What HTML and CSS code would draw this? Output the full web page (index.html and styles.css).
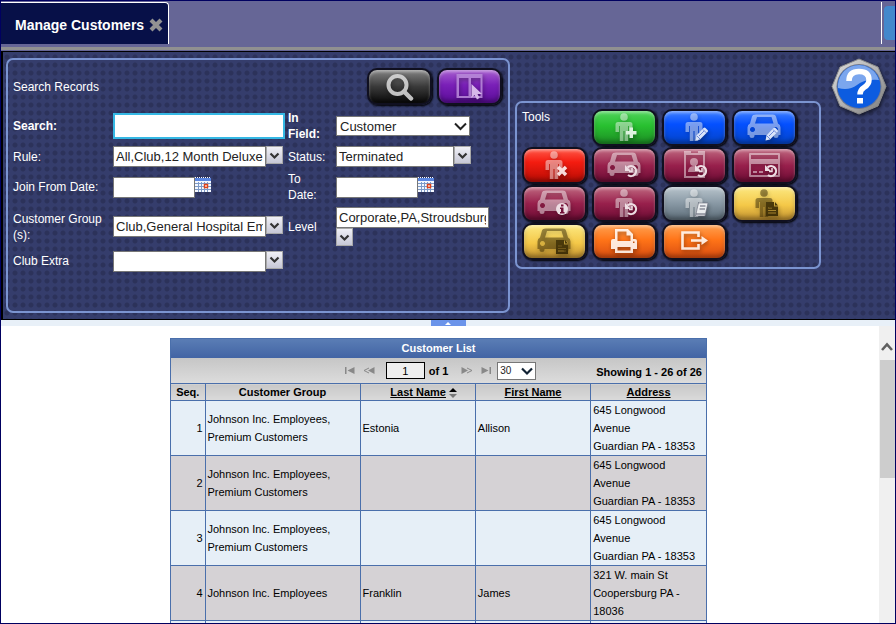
FILE: index.html
```
<!doctype html>
<html lang="en">
<head>
  <meta charset="UTF-8">
  <meta name="viewport" content="width=device-width, initial-scale=1.0">
  <title>Manage Customers</title>
  <link rel="stylesheet" href="styles.css">
</head>
<body>
  <!-- shared icons -->
  <svg class="sprite" aria-hidden="true">
    <symbol id="person" viewBox="0 0 65 37">
      <circle cx="32" cy="8" r="3.8"/>
      <path d="M26 13h12q2.500 0 2.500 2.500V23h-3.500v-6h-.8V32h-3.700V22h-1V32h-3.700V17h-.8v6h-3.500v-7.500q0-2.500 2.500-2.500z"/>
    </symbol>
    <symbol id="car" viewBox="0 0 65 37">
      <path fill-rule="evenodd" d="M24 5.500h17q2.500 0 3 2l2 7q2.500 1 2.500 4V26h-2v1q0 2-2.500 2t-2.500-2v-1H22.500v1q0 2-2.500 2t-2.500-2v-1h-2v-7.500q0-3 2.500-4l2-7q.5-2 4-2zM25 8l-2 6.500h18.500L39.500 8zM20.500 18a2.500 2.500 0 1 0 .01 0zM43.500 18a2.500 2.500 0 1 0 .01 0z"/>
    </symbol>
    <symbol id="reload" viewBox="0 0 65 37">
      <path d="M35.500 20.500A5 5 0 1 1 36 28" fill="none" stroke="currentColor" stroke-width="2.200"/>
      <path d="M33 18v6h6z"/>
      <path d="M40 21v3.500h-3" fill="none" stroke="currentColor" stroke-width="1.500"/>
    </symbol>
    <symbol id="pencil" viewBox="0 0 65 37">
      <path d="M33.500 31.500l1-5 7-7.500q1-1 2 0l2 2q1 1 0 2l-7.500 7.500z"/>
      <path d="M35 27l3 3M41 20.500l3.500 3.500M37 27l5-5" fill="none" stroke="#4a68c8" stroke-width=".7"/>
    </symbol>
    <symbol id="doc" viewBox="0 0 65 37">
      <path fill-rule="evenodd" d="M34 17h8v4.500h4V31H34zM43 17l3 3.500h-3zM36 22.500v1h4v-1zM36 25v1h8v-1zM36 27.500v1h8v-1z"/>
    </symbol>
    <symbol id="chevron" viewBox="0 0 15 15">
      <path d="M3.500 5.500l4 4 4-4" fill="none" stroke="#333" stroke-width="2.200"/>
    </symbol>
    <symbol id="calendar" viewBox="0 0 16 15">
      <path d="M0 2h16v13H0z" fill="#f4f8ff"/>
      <path d="M0 1h16v3H0z" fill="#5b86e0"/>
      <path d="M0 .5h16" stroke="#fff" stroke-dasharray="1 1"/>
      <path d="M0 6.500h16M0 9.500h16M0 12.500h16M3.500 5v10M6.500 5v10M9.500 5v10M12.500 5v10" stroke="#7d9bc9" fill="none"/>
      <path d="M9.500 7.500h3v3h-3z" fill="#fff" stroke="#e0431b" stroke-width="1.500"/>
    </symbol>
  </svg>

  <div id="app">
    <header class="tabs">
      <div class="tab">
        <span>Manage Customers</span>
        <button class="tab-close" type="button" aria-label="Close tab">
          <svg width="14" height="14" viewBox="0 0 14 14"><path d="M2 2l10 10M12 2L2 12" stroke="#929292" stroke-width="4.200"/></svg>
        </button>
      </div>
      <div class="tabs-end">
        <button class="tabs-menu" type="button" aria-label="Menu"></button>
      </div>
    </header>

    <section class="panel">
      <form class="box search">
        <div class="search-head">
          <span>Search Records</span>
          <div class="search-buttons">
            <button class="btn black" type="button" aria-label="Search">
              <svg viewBox="0 0 65 37"><circle cx="30.500" cy="17" r="9" fill="none" stroke="#ddd" stroke-width="4"/><path d="M37 23.500l7 7" stroke="#ddd" stroke-width="4.500" stroke-linecap="round"/></svg>
            </button>
            <button class="btn purple" type="button" aria-label="Select columns">
              <svg viewBox="0 0 65 37"><path fill="#b98bd9" fill-rule="evenodd" d="M19.500 6h26v24h-26zM22 10v18h9.500V10zM34 10v18h9.500V10z"/><path d="M34.500 16v14l3-3 2.500 4.500 2.500-1.500-2-4h4.500z" fill="#e8d4f4"/></svg>
            </button>
          </div>
        </div>

        <div class="fields">
          <label class="strong" for="search">Search:</label>
          <div><input class="focus" id="search" type="text"></div>
          <label class="strong" for="field">In Field:</label>
          <div class="select">
            <select id="field"><option>Customer</option></select>
            <svg class="arrow" width="13" height="13" viewBox="0 0 13 13"><path d="M1 3.500l5.500 5.500L12 3.500" fill="none" stroke="#222" stroke-width="2"/></svg>
          </div>

          <label for="rule">Rule:</label>
          <div class="combo"><input class="wide" id="rule" type="text" value="All,Club,12 Month Deluxe"><button class="drop" type="button" aria-label="Choose rule"><svg><use href="#chevron"/></svg></button></div>
          <label for="status">Status:</label>
          <div class="combo"><input class="medium" id="status" type="text" value="Terminated"><button class="drop" type="button" aria-label="Choose status"><svg><use href="#chevron"/></svg></button></div>

          <label for="from">Join From Date:</label>
          <div class="combo"><input class="date" id="from" type="text"><button class="cal" type="button" aria-label="Pick from date"><svg><use href="#calendar"/></svg></button></div>
          <label for="to">To Date:</label>
          <div class="combo"><input class="date" id="to" type="text"><button class="cal" type="button" aria-label="Pick to date"><svg><use href="#calendar"/></svg></button></div>

          <label for="group">Customer Group (s):</label>
          <div class="combo"><input class="wide" id="group" type="text" value="Club,General Hospital Employees"><button class="drop" type="button" aria-label="Choose group"><svg><use href="#chevron"/></svg></button></div>
          <label for="level">Level</label>
          <div class="combo wrap"><input class="wide" id="level" type="text" value="Corporate,PA,Stroudsburg"><button class="drop" type="button" aria-label="Choose level"><svg><use href="#chevron"/></svg></button></div>

          <label for="extra">Club Extra</label>
          <div class="combo"><input class="wide" id="extra" type="text"><button class="drop" type="button" aria-label="Choose extra"><svg><use href="#chevron"/></svg></button></div>
        </div>
      </form>

      <div class="box tools">
        <span class="tools-title">Tools</span>
        <button class="btn green" type="button" aria-label="Add customer">
          <svg viewBox="0 0 65 37"><use class="dim" href="#person"/><path d="M37.500 18.500h3.500v3.500h3.500v3.500h-3.500v3.500h-3.500v-3.500H34v-3.500h3.500z"/></svg>
        </button>
        <button class="btn blue" type="button" aria-label="Edit customer">
          <svg viewBox="0 0 65 37"><use class="dim" href="#person"/><use href="#pencil"/></svg>
        </button>
        <button class="btn blue" type="button" aria-label="Edit vehicle">
          <svg viewBox="0 0 65 37"><use class="dim" href="#car"/><use href="#pencil"/></svg>
        </button>
        <button class="btn red" type="button" aria-label="Delete customer">
          <svg viewBox="0 0 65 37"><use class="dim" href="#person"/><path d="M36 20l8 8M44 20l-8 8" stroke="currentColor" stroke-width="3.500"/></svg>
        </button>
        <button class="btn maroon" type="button" aria-label="Vehicle history">
          <svg viewBox="0 0 65 37"><use class="dim" href="#car"/><use href="#reload"/></svg>
        </button>
        <button class="btn maroon" type="button" aria-label="Badge history">
          <svg viewBox="0 0 65 37"><path class="dim" fill-rule="evenodd" d="M22 4h7v2h7V4h7v27H22zM24 8v21h17V8z"/><g class="dim"><circle cx="32" cy="15" r="4"/><path d="M26 25q0-6 6-6t6 6z"/></g><use href="#reload"/></svg>
        </button>
        <button class="btn maroon" type="button" aria-label="Card history">
          <svg viewBox="0 0 65 37"><path class="dim" fill-rule="evenodd" d="M18 6h29q1 0 1 1v22q0 1-1 1H18q-1 0-1-1V7q0-1 1-1zM19 8v4h27V8zM19 17v11h27V17zM21 24v2h4v-2zM27 24v2h4v-2z"/><use href="#reload"/></svg>
        </button>
        <button class="btn maroon" type="button" aria-label="Vehicle info">
          <svg viewBox="0 0 65 37"><use class="dim" href="#car"/><circle cx="40" cy="24" r="6"/><path d="M39 19.500h2.500v2H39zM38 22.500h3.500V27h1v1.500H38V27h1v-3h-1z" fill="#701038"/></svg>
        </button>
        <button class="btn maroon" type="button" aria-label="Customer history">
          <svg viewBox="0 0 65 37"><use class="dim" href="#person"/><use href="#reload"/></svg>
        </button>
        <button class="btn gray" type="button" aria-label="Customer notes">
          <svg viewBox="0 0 65 37"><use class="dim" href="#person"/><path d="M36.500 18H46l-3 13h-9.500z" stroke="#667" stroke-width=".6"/><path d="M38 21h5.500M37.500 24h5.500M34 29h9" stroke="#556" fill="none"/></svg>
        </button>
        <button class="btn yellow" type="button" aria-label="Customer report">
          <svg viewBox="0 0 65 37"><use class="dim" href="#person"/><use href="#doc"/></svg>
        </button>
        <button class="btn yellow" type="button" aria-label="Vehicle report">
          <svg viewBox="0 0 65 37"><use class="dim" href="#car"/><use href="#doc"/></svg>
        </button>
        <button class="btn orange" type="button" aria-label="Print">
          <svg viewBox="0 0 65 37"><path fill-rule="evenodd" d="M23 6h13l5 5v5h2q2 0 2 2v8h-4v4H23v-4h-4v-8q0-2 2-2h2zM25.500 8.500V18h13v-5.500H34.500v-4zM25.500 24v3.500h13V24zM41 18.500v1.500h1.500v-1.500z"/></svg>
        </button>
        <button class="btn orange" type="button" aria-label="Exit">
          <svg viewBox="0 0 65 37"><path d="M36.500 14V9.500h-16v16h16V21" fill="none" stroke="currentColor" stroke-width="2.600"/><path d="M29 16.200h10.500V13l6.500 4.500-6.500 4.500v-3.200H29z"/></svg>
        </button>
      </div>

      <button class="help" type="button" aria-label="Help">
        <svg width="56" height="57" viewBox="0 0 56 57">
          <defs>
            <linearGradient id="rim" x1="0" y1="0" x2="1" y2="1">
              <stop offset="0" stop-color="#ddd"/><stop offset=".5" stop-color="#b4b4b4"/><stop offset="1" stop-color="#777"/>
            </linearGradient>
          </defs>
          <path d="M28 1l19 8 8 19.500-8 19.500-19 8-19-8-8-19.500L9 9z" fill="url(#rim)" stroke="#8a8a8a"/>
          <circle cx="28" cy="28.500" r="22.500" fill="#6f7890"/>
          <circle cx="28" cy="28.500" r="21.500" fill="#0c5ce0"/>
          <path d="M7 30a21 21 0 0 1 41-8q-15-1-22 5-8 6-19 3z" fill="#7ba6ee"/>
          <path d="M18 23q0-9.500 10-9.500t10 8.500q0 4.500-5 7.500-4 2.500-4 7" fill="none" stroke="#fff" stroke-width="5.500"/>
          <path d="M26 40h6v5.500h-6z" fill="#fff"/>
        </svg>
      </button>
    </section>

    <div class="splitter">
      <button class="splitter-handle" type="button" aria-label="Collapse panel"></button>
    </div>

    <main class="content">
      <div class="list">
        <div class="list-title">Customer List</div>
        <div class="pager">
          <span></span>
          <div class="pager-nav">
            <button type="button" aria-label="First page"><svg width="10" height="7" viewBox="0 0 10 7"><path d="M0 0h1.500v7H0zM9.500 0v7L2.500 3.500z"/></svg></button>
            <button type="button" aria-label="Previous page"><svg width="12" height="7" viewBox="0 0 12 7"><path d="M11.500 0v7L5 3.500z"/><path d="M6 1L1 3.500 6 6" fill="none" stroke="#888"/></svg></button>
            <input type="text" value="1" aria-label="Page">
            <span>of 1</span>
            <button class="next" type="button" aria-label="Next page"><svg width="12" height="7" viewBox="0 0 12 7"><path d="M.5 0v7L7 3.500z"/><path d="M6 1l5 2.500L6 6" fill="none" stroke="#888"/></svg></button>
            <button type="button" aria-label="Last page"><svg width="10" height="7" viewBox="0 0 10 7"><path d="M8.500 0H10v7H8.500zM.5 0v7l7-3.500z"/></svg></button>
            <div class="select small">
              <select aria-label="Rows per page"><option>30</option></select>
              <svg class="arrow" width="12" height="12" viewBox="0 0 12 12"><path d="M1 3.500l5 5 5-5" fill="none" stroke="#123" stroke-width="2.200"/></svg>
            </div>
          </div>
          <span class="showing">Showing 1 - 26 of 26</span>
        </div>
        <table>
          <thead>
            <tr>
              <th class="col-seq">Seq.</th>
              <th class="col-group">Customer Group</th>
              <th><a href="#">Last Name</a> <svg width="8" height="10" viewBox="0 0 8 10"><path d="M0 4l4-4 4 4z"/><path d="M0 6h8l-4 4z" fill="#777"/></svg></th>
              <th><a href="#">First Name</a></th>
              <th><a href="#">Address</a></th>
            </tr>
          </thead>
          <tbody>
            <tr>
              <td class="seq">1</td>
              <td>Johnson Inc. Employees, Premium Customers</td>
              <td>Estonia</td>
              <td>Allison</td>
              <td>645 Longwood Avenue<br>Guardian PA - 18353</td>
            </tr>
            <tr>
              <td class="seq">2</td>
              <td>Johnson Inc. Employees, Premium Customers</td>
              <td></td>
              <td></td>
              <td>645 Longwood Avenue<br>Guardian PA - 18353</td>
            </tr>
            <tr>
              <td class="seq">3</td>
              <td>Johnson Inc. Employees, Premium Customers</td>
              <td></td>
              <td></td>
              <td>645 Longwood Avenue<br>Guardian PA - 18353</td>
            </tr>
            <tr>
              <td class="seq">4</td>
              <td>Johnson Inc. Employees</td>
              <td>Franklin</td>
              <td>James</td>
              <td>321 W. main St<br>Coopersburg PA - 18036</td>
            </tr>
            <tr>
              <td class="seq"></td>
              <td></td>
              <td></td>
              <td></td>
              <td></td>
            </tr>
          </tbody>
        </table>
      </div>
      <div class="scrollbar">
        <svg width="12" height="10" viewBox="0 0 12 10"><path d="M1 8l5-5.500L11 8" fill="none" stroke="#606060" stroke-width="2.600"/></svg>
        <div class="thumb"></div>
      </div>
    </main>
  </div>
</body>
</html>
```
FILE: styles.css
```
* {
    box-sizing: border-box;
}

body {
    margin: 0;
    font-family: "Liberation Sans", Arial, sans-serif;
    font-size: 12px;
    line-height: 16px;
    color: #000;
}

button {
    padding: 0;
    border: none;
    background: none;
    cursor: pointer;
}

svg {
    display: block;
}

.sprite {
    position: absolute;
    width: 0;
    height: 0;
}

#app {
    display: flex;
    flex-direction: column;
    height: 100vh;
    overflow: hidden;
    border: 1px solid #000060;
}

/* tabs */
.tabs {
    display: flex;
    justify-content: space-between;
    flex: none;
    height: 46px;
    padding: 1px 0 3px;
    background: #666696;
}

.tab {
    display: flex;
    align-items: center;
    gap: 5px;
    padding: 2px 5px 0 14px;
    color: #fff;
    font-size: 14px;
    font-weight: bold;
    background: #071048;
    border-top: 1px solid #fff;
    border-right: 1px solid #fff;
    border-top-right-radius: 4px;
}

.tabs-end {
    display: flex;
    padding: 4px 0 4px 2px;
    border-left: 1px solid #fff;
}

.tabs-menu {
    width: 11px;
    background: #4288cc;
    border-radius: 4px 0 0 4px;
}

/* search and tools */
.panel {
    display: flex;
    align-items: flex-start;
    flex: none;
    padding: 6px 8px 6px 3px;
    color: #fff;
    background: radial-gradient(circle at 4px 4px, #2c325a 2px, #353d6c 3px) 0 1px / 8px 8px;
    border: solid #000;
    border-width: 1px 0 1px 2px;
    outline: 1px solid #666696;
    box-shadow: 0 -3px 0 1px #909090;
    margin-top: 4px;
}

.box {
    border: 2px solid #7b94d0;
    border-radius: 7px;
}

.search {
    flex: 0 1 504px;
    min-height: 255px;
    padding: 8px 5px;
}

.search-head {
    display: flex;
    align-items: center;
    justify-content: space-between;
    height: 37px;
    margin-bottom: 5px;
}

.search-buttons {
    display: flex;
    gap: 5px;
    padding-right: 1px;
}

.fields {
    display: grid;
    grid-template-columns: 100px 175px 48px 1fr;
    grid-template-rows: 32px 29px 32px 47px 22px;
    align-items: center;
}

.fields label {
    padding-right: 8px;
}

.strong {
    font-weight: bold;
}

input,
select {
    height: 21px;
    padding: 0 2px;
    color: #222;
    font-family: inherit;
    font-size: 13px;
    background: #fff;
    border: 1px solid #777;
    border-radius: 0;
    outline: none;
}

.focus {
    display: block;
    width: 172px;
    height: 26px;
    border: 2px solid #35b8e4;
}

.wide {
    width: 153px;
}

.medium {
    width: 118px;
}

.date {
    width: 82px;
}

.combo {
    display: flex;
    align-items: flex-start;
}

.wrap {
    flex-direction: column;
}

.drop {
    width: 17px;
    height: 18px;
    background: linear-gradient(#f0f0f6, #c6c7d6);
    border: 1px solid #a8a8a8;
}

.drop svg {
    width: 15px;
    height: 15px;
}

.cal svg {
    width: 16px;
    height: 15px;
}

.select {
    position: relative;
    width: 134px;
}

.select select {
    display: block;
    width: 100%;
    height: 20px;
    padding-left: 3px;
    appearance: none;
}

.arrow {
    position: absolute;
    top: 4px;
    right: 3px;
    pointer-events: none;
}

.tools {
    display: grid;
    grid-template-columns: repeat(4, 65px);
    grid-auto-rows: 37px;
    gap: 1px 5px;
    flex: 0 0 306px;
    margin: 43px 0 0 5px;
    padding: 6px 4px 7px 5px;
}

.btn {
    width: 65px;
    height: 37px;
    color: #fff;
    border: 2px solid #101020;
    border-radius: 10px;
    box-shadow: inset 0 2px 3px rgba(255, 255, 255, 0.4), inset 0 -3px 4px rgba(0, 0, 0, 0.3), 1px 1px 2px #000;
}

.btn svg {
    width: 65px;
    height: 37px;
    margin: -2px;
    fill: currentColor;
    opacity: 0.85;
    filter: drop-shadow(1px 2px 2px rgba(0, 0, 0, 0.4));
}

.dim {
    opacity: 0.55;
}

.black {
    background: linear-gradient(#858585, #3a3a3a 50%, #0a0a0a);
}

.purple {
    background: linear-gradient(#a860d0, #7a20b8 45%, #5a0c98);
}

.green {
    background: linear-gradient(#50d45c, #28c030 45%, #1c8c24);
}

.blue {
    background: linear-gradient(#4080ff, #0450ff 40%, #0444c8);
}

.red {
    background: linear-gradient(#ff5848, #f41c10 40%, #b80c04);
}

.maroon {
    background: linear-gradient(#c06880, #98204c 50%, #6c0c34);
}

.gray {
    background: linear-gradient(#b8c4cc, #8898a4 50%, #5c6c78);
}

.yellow {
    color: #2c2000;
    background: linear-gradient(#fce880, #f4c848 55%, #c09030);
}

.orange {
    background: linear-gradient(#ffa050, #ff7418 45%, #d84c10);
}

.help {
    flex: none;
    margin-left: auto;
    filter: drop-shadow(1px 2px 2px rgba(0, 0, 0, 0.6));
}

/* splitter */
.splitter {
    flex: none;
    height: 6px;
    background: #e8f0f8;
}

.splitter-handle {
    display: flex;
    align-items: center;
    justify-content: center;
    width: 35px;
    height: 6px;
    margin: 0 auto;
    background: #6b94ea;
}

.splitter-handle::before {
    content: "";
    border: 3px solid transparent;
    border-top: none;
    border-bottom-color: #fff;
}

/* customer list */
.content {
    display: flex;
    flex: 1;
    gap: 3px;
    min-height: 0;
    background: #fff;
}

.list {
    width: 537px;
    height: max-content;
    margin: 12px auto 0;
    font-size: 11px;
    line-height: 18px;
    border: 1px solid #4a6fab;
}

.list-title {
    height: 19px;
    color: #fff;
    font-weight: bold;
    text-align: center;
    background: linear-gradient(#5a7db5, #4264a4);
}

.pager {
    display: grid;
    grid-template-columns: 1fr auto 1fr;
    align-items: center;
    height: 25px;
    padding: 0 4px 0 6px;
    font-weight: bold;
    background: linear-gradient(#c6c6c6, #dcdcdc);
}

.pager-nav {
    display: flex;
    align-items: center;
    gap: 4px;
}

.pager-nav button {
    padding: 0 2px;
}

.pager-nav button svg {
    fill: #888;
}

.pager-nav input {
    width: 39px;
    height: 17px;
    margin-left: 5px;
    color: #000;
    font-size: 11px;
    text-align: center;
    background: #efefef;
    border: 1px solid #000;
}

.pager-nav .next {
    margin-left: 7px;
}

.small {
    width: 39px;
}

.small select {
    height: 18px;
    padding-left: 2px;
    font-size: 10px;
}

.small .arrow {
    top: 3px;
}

.showing {
    padding-top: 3px;
    text-align: right;
}

table {
    width: 100%;
    table-layout: fixed;
    border-collapse: collapse;
}

th,
td {
    padding: 0 2px;
    border: 1px solid #4a6fab;
}

tr > :first-child {
    border-left: none;
}

tr > :last-child {
    border-right: none;
}

th {
    height: 17px;
    line-height: 16px;
    background: linear-gradient(#c8c8c8, #dadada);
}

th a {
    color: #000;
}

/* keeps the column name centred, the sort arrow hangs beside it */
th svg {
    display: inline-block;
    margin-right: -12px;
    vertical-align: middle;
}

.col-seq {
    width: 34px;
}

.col-group {
    width: 155px;
}

td {
    height: 55px;
    background: #e6eff7;
}

tbody tr:nth-child(even) td {
    background: #d5d2d5;
}

.seq {
    text-align: right;
}

.scrollbar {
    flex: none;
    width: 16px;
    padding-left: 1px;
    background: #f0f0f0;
}

.scrollbar svg {
    margin: 16px 0 8px 1px;
}

.thumb {
    height: 118px;
    background: #cdcdcd;
}
```
